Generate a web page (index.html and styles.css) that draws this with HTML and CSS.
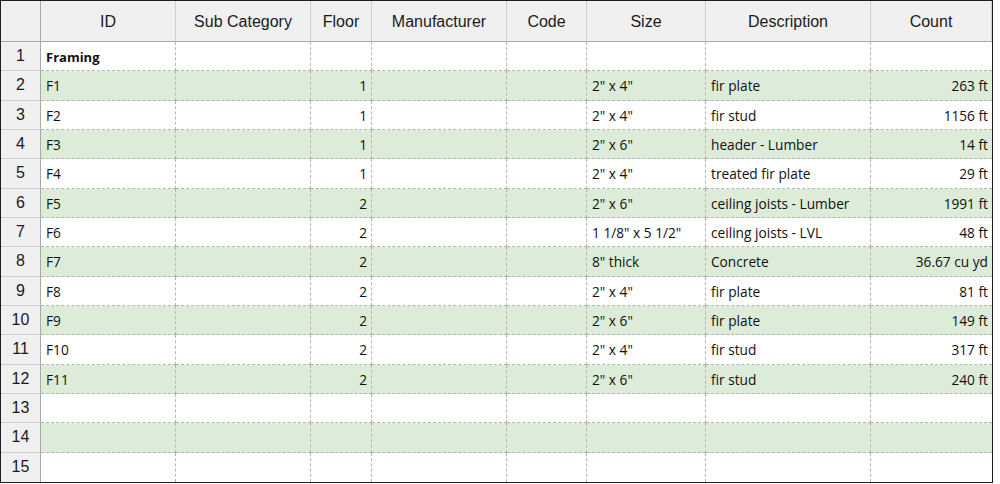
FILE: index.html
```html
<!DOCTYPE html>
<html lang="en">
<head>
<meta charset="utf-8">
<title>Framing schedule</title>
<link rel="stylesheet" href="styles.css">
</head>
<body>
<div class="sheet">
  <div class="hd corner"></div>
  <div class="hd">ID</div>
  <div class="hd">Sub Category</div>
  <div class="hd">Floor</div>
  <div class="hd">Manufacturer</div>
  <div class="hd">Code</div>
  <div class="hd">Size</div>
  <div class="hd">Description</div>
  <div class="hd">Count</div>

  <div class="rn">1</div>
  <div class="c b">Framing</div><div class="c"></div><div class="c r"></div><div class="c"></div><div class="c"></div><div class="c"></div><div class="c"></div><div class="c r last"></div>

  <div class="rn">2</div>
  <div class="c g">F1</div><div class="c g"></div><div class="c g r">1</div><div class="c g"></div><div class="c g"></div><div class="c g">2" x 4"</div><div class="c g">fir plate</div><div class="c g r last">263 ft</div>

  <div class="rn">3</div>
  <div class="c">F2</div><div class="c"></div><div class="c r">1</div><div class="c"></div><div class="c"></div><div class="c">2" x 4"</div><div class="c">fir stud</div><div class="c r last">1156 ft</div>

  <div class="rn">4</div>
  <div class="c g">F3</div><div class="c g"></div><div class="c g r">1</div><div class="c g"></div><div class="c g"></div><div class="c g">2" x 6"</div><div class="c g">header - Lumber</div><div class="c g r last">14 ft</div>

  <div class="rn">5</div>
  <div class="c">F4</div><div class="c"></div><div class="c r">1</div><div class="c"></div><div class="c"></div><div class="c">2" x 4"</div><div class="c">treated fir plate</div><div class="c r last">29 ft</div>

  <div class="rn">6</div>
  <div class="c g">F5</div><div class="c g"></div><div class="c g r">2</div><div class="c g"></div><div class="c g"></div><div class="c g">2" x 6"</div><div class="c g">ceiling joists - Lumber</div><div class="c g r last">1991 ft</div>

  <div class="rn">7</div>
  <div class="c">F6</div><div class="c"></div><div class="c r">2</div><div class="c"></div><div class="c"></div><div class="c">1 1/8" x 5 1/2"</div><div class="c">ceiling joists - LVL</div><div class="c r last">48 ft</div>

  <div class="rn">8</div>
  <div class="c g">F7</div><div class="c g"></div><div class="c g r">2</div><div class="c g"></div><div class="c g"></div><div class="c g">8" thick</div><div class="c g">Concrete</div><div class="c g r last">36.67 cu yd</div>

  <div class="rn">9</div>
  <div class="c">F8</div><div class="c"></div><div class="c r">2</div><div class="c"></div><div class="c"></div><div class="c">2" x 4"</div><div class="c">fir plate</div><div class="c r last">81 ft</div>

  <div class="rn">10</div>
  <div class="c g">F9</div><div class="c g"></div><div class="c g r">2</div><div class="c g"></div><div class="c g"></div><div class="c g">2" x 6"</div><div class="c g">fir plate</div><div class="c g r last">149 ft</div>

  <div class="rn">11</div>
  <div class="c">F10</div><div class="c"></div><div class="c r">2</div><div class="c"></div><div class="c"></div><div class="c">2" x 4"</div><div class="c">fir stud</div><div class="c r last">317 ft</div>

  <div class="rn">12</div>
  <div class="c g">F11</div><div class="c g"></div><div class="c g r">2</div><div class="c g"></div><div class="c g"></div><div class="c g">2" x 6"</div><div class="c g">fir stud</div><div class="c g r last">240 ft</div>

  <div class="rn">13</div>
  <div class="c"></div><div class="c"></div><div class="c"></div><div class="c"></div><div class="c"></div><div class="c"></div><div class="c"></div><div class="c last"></div>

  <div class="rn">14</div>
  <div class="c g"></div><div class="c g"></div><div class="c g"></div><div class="c g"></div><div class="c g"></div><div class="c g"></div><div class="c g"></div><div class="c g last"></div>

  <div class="rn lastrow">15</div>
  <div class="c lastrow"></div><div class="c lastrow"></div><div class="c lastrow"></div><div class="c lastrow"></div><div class="c lastrow"></div><div class="c lastrow"></div><div class="c lastrow"></div><div class="c last lastrow"></div>
</div>
</body>
</html>
```
FILE: styles.css
```css
html, body {
  margin: 0;
  padding: 0;
  background: #ffffff;
}

.sheet {
  display: grid;
  grid-template-columns: 40px 135px 135px 61px 135px 80px 119px 165px 121px;
  grid-template-rows: 41px repeat(15, 1fr);
  width: 991px;
  height: 481px;
  border: 1px solid #1e1e1e;
  color: #111;
}

.hd {
  box-sizing: border-box;
  background: #f0f0f0;
  border-right: 1px solid #cfcfcf;
  border-bottom: 1px solid #a8a8a8;
  font-family: "Liberation Sans", Arial, sans-serif;
  font-size: 16px;
  display: flex;
  align-items: center;
  justify-content: center;
  padding-top: 1px;
  color: #1a1a1a;
}

.hd:last-child {
  border-right: none;
}

.hd.corner {
  border-right: 1px solid #a8a8a8;
}

.rn {
  box-sizing: border-box;
  background: #f0f0f0;
  border-right: 1px solid #a8a8a8;
  border-bottom: 1px solid #cfcfcf;
  font-family: "Liberation Sans", Arial, sans-serif;
  font-size: 16px;
  display: flex;
  align-items: center;
  justify-content: center;
  color: #1a1a1a;
}

.c {
  box-sizing: border-box;
  background: #ffffff;
  border-right: 1px dashed #b4b4b4;
  border-bottom: 1px dashed #b4b4b4;
  font-family: "Open Sans", "Noto Sans", sans-serif;
  font-size: 13.7px;
  display: flex;
  align-items: center;
  padding: 1px 4px 0 5px;
  white-space: nowrap;
  overflow: hidden;
}

.c.g {
  background: #dcecd8;
}

.c.r {
  justify-content: flex-end;
}

.c.b {
  font-weight: bold;
  font-size: 13px;
}

.c.last {
  border-right: none;
}

.lastrow {
  border-bottom: none;
}
```
